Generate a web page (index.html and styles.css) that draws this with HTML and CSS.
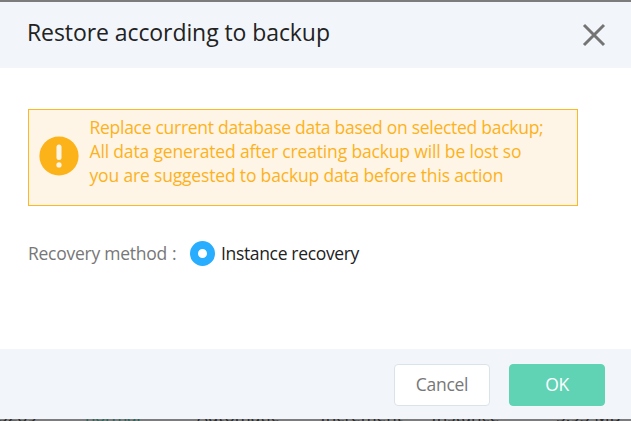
FILE: index.html
```html
<!DOCTYPE html>
<html lang="en">
<head>
<meta charset="utf-8">
<title>Restore according to backup</title>
<link rel="stylesheet" href="styles.css">
</head>
<body>
<div class="page">
  <div class="backup-row">
    <span>5289</span><span class="status">normal</span><span>Automatic</span><span>Increment</span><span>Instance</span><span>5.93 MB</span>
  </div>
</div>
<section class="dialog" role="dialog">
  <header class="dialog-header">
    <h1 class="title">Restore according to backup</h1>
    <svg class="close" viewBox="0 0 24 24"><path d="M2 2 22 22M22 2 2 22"/></svg>
  </header>
  <main class="dialog-body">
    <div class="notice">
      <svg class="notice-icon" viewBox="0 0 40 40"><circle cx="20" cy="20" r="19.6"/><path d="M20 11v10.5"/><circle class="dot" cx="20" cy="28.9" r="2.6"/></svg>
      <p class="notice-text"><span class="line1">Replace current database data based on selected backup;</span><br><span class="line2">All data generated after creating backup will be lost so</span><br><span class="line3">you are suggested to backup data before this action</span></p>
    </div>
    <div class="method">
      <span class="method-label">Recovery method<span class="colon">:</span></span>
      <span class="radio"></span>
      <span class="method-value">Instance recovery</span>
    </div>
  </main>
  <footer class="dialog-footer">
    <button class="button cancel">Cancel</button>
    <button class="button ok">OK</button>
  </footer>
</section>
</body>
</html>
```

FILE: styles.css
```css
* { box-sizing: border-box; }
body {
  margin: 0;
  width: 631px;
  height: 421px;
  overflow: hidden;
  background: #7c7c7c;
  font-family: "Open Sans", "Noto Sans", sans-serif;
  font-size: 17.5px;
  letter-spacing: -0.3px;
}
.page {
  height: 421px;
  padding-top: 405px;
  overflow: hidden;
}
.backup-row {
  display: grid;
  grid-template-columns: 87px 112px 123px 111px 125px 80px;
  margin-left: -2px;
  font-family: "Noto Sans", sans-serif;
  font-size: 17px;
  letter-spacing: 0;
  line-height: 22px;
  color: #2b2b2b;
}
.status {
  letter-spacing: -0.4px;
  color: #2a6658;
}
.dialog {
  position: absolute;
  top: 2px;
  left: 0;
  width: 631px;
  height: 417px;
  display: flex;
  flex-direction: column;
  background: #fff;
}
.dialog-header {
  height: 66px;
  display: flex;
  justify-content: space-between;
  padding: 15px 25px 0 27px;
  background: #f2f6fb;
}
.title {
  margin: 0;
  font-size: 23px;
  font-weight: 400;
  line-height: 31px;
  letter-spacing: -0.08px;
  color: #222;
  white-space: nowrap;
}
.close {
  width: 24px;
  height: 24px;
  margin-top: 6px;
  fill: none;
  stroke: #747474;
  stroke-width: 3;
}
.dialog-body {
  flex: 1;
  padding: 41px 53px 0 28px;
}
.notice {
  height: 97px;
  display: flex;
  padding: 5px 0 0 10px;
  border: 1px solid #fcb827;
  background: #fff5e6;
}
.notice-icon {
  flex: none;
  width: 40px;
  height: 40px;
  margin: 21px 10.5px 0 0;
  fill: #fcb219;
}
.notice-icon path {
  stroke: #fff5e6;
  stroke-width: 5;
  stroke-linecap: round;
}
.notice-icon .dot { fill: #fff5e6; }
.notice-text {
  margin: 0;
  line-height: 24px;
  color: #fcb21d;
  white-space: nowrap;
}
.line1 { letter-spacing: -0.28px; }
.line2 { letter-spacing: -0.16px; }
.line3 { letter-spacing: -0.17px; }
.method {
  display: flex;
  align-items: center;
  height: 26px;
  margin-top: 34px;
  white-space: nowrap;
}
.method-label {
  width: 162px;
  letter-spacing: -0.26px;
  color: #777;
}
.colon { margin-left: 5px; }
.radio {
  width: 25px;
  height: 25px;
  margin-right: 6px;
  border: 8px solid #29adff;
  border-radius: 50%;
}
.method-value {
  letter-spacing: -0.34px;
  color: #222;
}
.dialog-footer {
  height: 70px;
  display: flex;
  justify-content: flex-end;
  gap: 19px;
  padding: 15px 26px 0 0;
  background: #f2f6fb;
}
.button {
  width: 96px;
  height: 42px;
  padding: 0 0 2px;
  border: 1px solid #dbe3ea;
  border-radius: 4px;
  font: inherit;
  letter-spacing: inherit;
  background: #fff;
  color: #777;
}
.ok {
  border-color: #60d3b5;
  background: #60d3b5;
  color: #fff;
}
```
